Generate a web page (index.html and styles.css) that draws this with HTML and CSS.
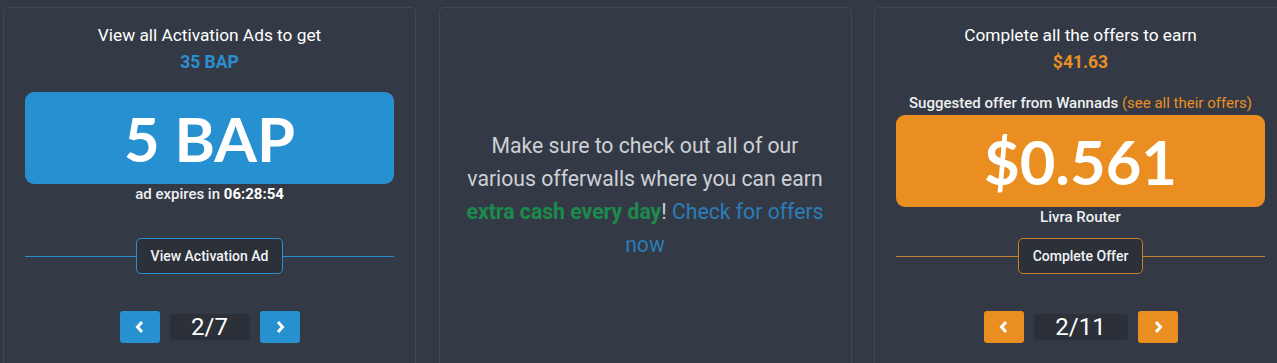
FILE: index.html
```html
<!DOCTYPE html>
<html>
<head>
<meta charset="utf-8">
<link rel="stylesheet" href="styles.css">
</head>
<body>
<div class="row">
  <div class="card">
    <div class="title">View all Activation Ads to get</div>
    <div class="total blue-text">35 BAP</div>
    <div class="bigbox blue-bg bigbox-ad">5 BAP</div>
    <div class="sub">ad expires in <b>06:28:54</b></div>
    <div class="divider blue-line divider-ad"><button class="action blue-border">View Activation Ad</button></div>
    <div class="pager">
      <button class="nav blue-bg"><svg width="10" height="14" viewBox="0 0 10 14"><polyline points="7,2 2.5,7 7,12" fill="none" stroke="#fff" stroke-width="3"/></svg></button>
      <div class="count count-ad">2/7</div>
      <button class="nav blue-bg"><svg width="10" height="14" viewBox="0 0 10 14"><polyline points="3,2 7.5,7 3,12" fill="none" stroke="#fff" stroke-width="3"/></svg></button>
    </div>
  </div>
  <div class="card card-mid">
    <p class="promo">Make sure to check out all of our various offerwalls where you can earn <b class="green">extra cash every day</b>! <span class="link">Check for offers now</span></p>
  </div>
  <div class="card">
    <div class="title">Complete all the offers to earn</div>
    <div class="total orange-text">$41.63</div>
    <div class="suggest">Suggested offer from Wannads <span class="orange-text light">(see all their offers)</span></div>
    <div class="bigbox orange-bg bigbox-offer">$0.561</div>
    <div class="sub">Livra Router</div>
    <div class="divider orange-line divider-offer"><button class="action orange-border">Complete Offer</button></div>
    <div class="pager">
      <button class="nav orange-bg"><svg width="10" height="14" viewBox="0 0 10 14"><polyline points="7,2 2.5,7 7,12" fill="none" stroke="#fff" stroke-width="3"/></svg></button>
      <div class="count count-offer">2/11</div>
      <button class="nav orange-bg"><svg width="10" height="14" viewBox="0 0 10 14"><polyline points="3,2 7.5,7 3,12" fill="none" stroke="#fff" stroke-width="3"/></svg></button>
    </div>
  </div>
</div>
</body>
</html>
```

FILE: styles.css
```css
html, body {
  margin: 0;
  padding: 0;
  background: #343a45;
  overflow: hidden;
  font-family: Roboto, "Liberation Sans", sans-serif;
  color: #fff;
}
.row {
  display: flex;
  gap: 22.5px;
  padding: 7px 0 0 3px;
  width: 1300px;
}
.card {
  flex: 0 0 auto;
  width: 413px;
  height: 375px;
  box-sizing: border-box;
  border: 1px solid #414854;
  border-radius: 5px;
  padding: 14px 21px 0;
  display: flex;
  flex-direction: column;
  align-items: stretch;
  text-align: center;
}
.title {
  font-size: 17.3px;
  line-height: 27px;
  color: #fff;
}
.total {
  font-size: 17.5px;
  line-height: 27px;
  font-weight: 700;
}
.blue-text { color: #2a8fd0; }
.orange-text { color: #ea8f24; }
.light { font-weight: 400; }
.blue-bg { background: #2790d0; }
.orange-bg { background: #ea8e22; }
.bigbox {
  height: 92px;
  border-radius: 9px;
  display: flex;
  align-items: center;
  justify-content: center;
  font-family: Lato, "Liberation Sans", sans-serif;
  font-weight: 700;
  font-size: 61.5px;
  color: #fff;
}
.bigbox-ad { margin-top: 16px; }
.bigbox-offer { margin-top: 2px; }
.suggest {
  margin-top: 17px;
  font-size: 15px;
  line-height: 20px;
  font-weight: 500;
  color: #eef0f2;
}
.sub {
  font-size: 15px;
  line-height: 21px;
  font-weight: 500;
  color: #eef0f2;
}
.sub b { font-weight: 700; color: #fff; }
.divider {
  display: flex;
  align-items: center;
  justify-content: center;
  position: relative;
}
.divider::before {
  content: "";
  position: absolute;
  left: 0;
  right: 0;
  top: 50%;
  height: 1px;
}
.blue-line::before { background: #2a8fd0; }
.orange-line::before { background: #c7802b; }
.divider-ad { margin-top: 33px; }
.divider-offer { margin-top: 10px; }
.action {
  position: relative;
  height: 36px;
  padding: 0 14px;
  background: #2b3039;
  border-radius: 5px;
  color: #f2f3f5;
  font-family: Roboto, "Liberation Sans", sans-serif;
  font-size: 14px;
  font-weight: 500;
}
.blue-border { border: 1px solid #2a8fd0; }
.orange-border { border: 1px solid #c7802b; }
.pager {
  margin-top: 37px;
  display: flex;
  justify-content: center;
  align-items: center;
  gap: 10px;
}
.nav {
  width: 40px;
  height: 32px;
  border: none;
  border-radius: 3px;
  padding: 0;
  display: flex;
  align-items: center;
  justify-content: center;
}
.count {
  height: 26px;
  line-height: 26px;
  background: #2b3039;
  border-radius: 4px;
  font-size: 24px;
  color: #fff;
}
.count-ad { width: 80px; }
.count-offer { width: 94px; }
.card-mid {
  justify-content: center;
  padding: 0 21px;
}
.promo {
  margin: 0;
  font-size: 21.2px;
  line-height: 33px;
  color: #cdd1d6;
}
.green { color: #1d8a4d; font-weight: 700; }
.link { color: #2a7db8; }
```
